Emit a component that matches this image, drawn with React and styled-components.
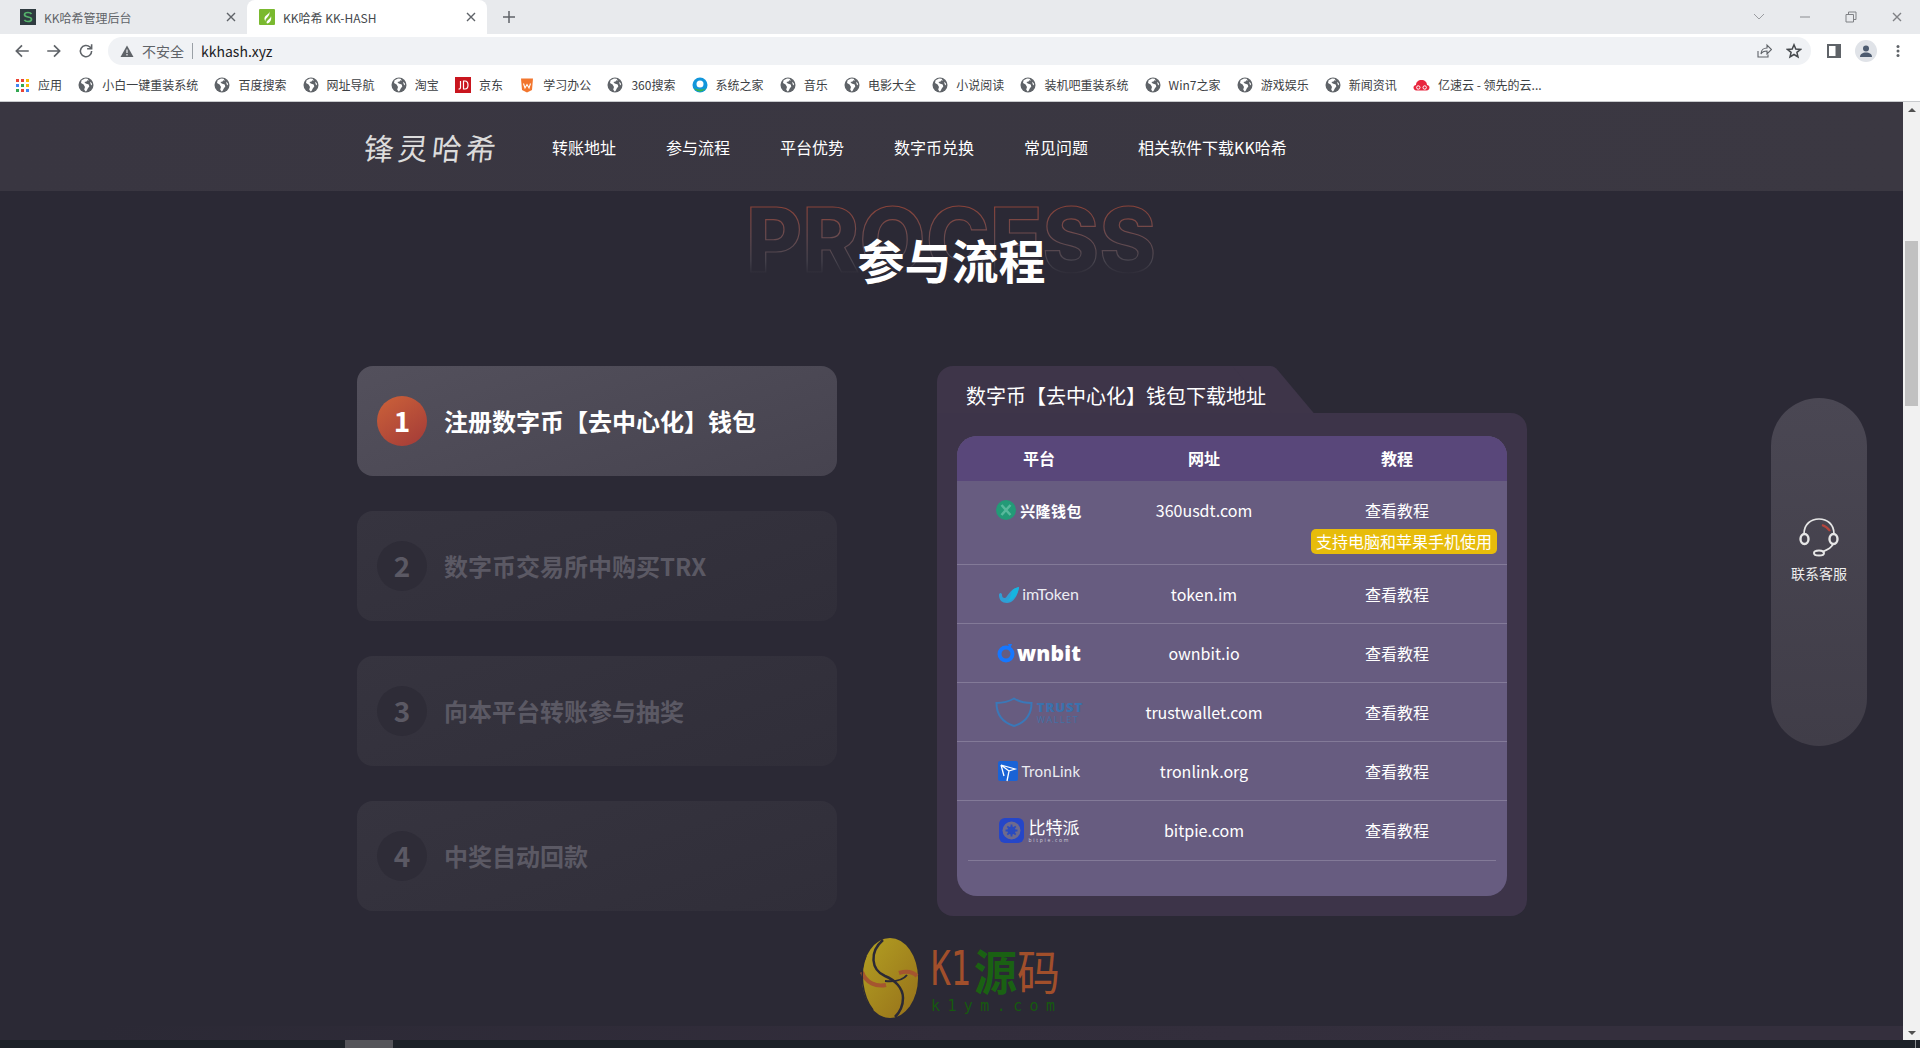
import React from "react";
import styled, { createGlobalStyle } from "styled-components";

const Global = createGlobalStyle`
  html, body { margin: 0; padding: 0; background: #2b2935; }
  body { font-family: "Noto Sans CJK SC", "Noto Sans", sans-serif; overflow: hidden; }
  * { box-sizing: border-box; }
`;

const Screen = styled.div`width: 1920px; height: 1048px; display: flex; flex-direction: column; overflow: hidden;`;

/* ---------- browser chrome ---------- */
const TabStrip = styled.div`height: 34px; background: #e8eaed; display: flex; align-items: stretch; flex: none;`;
const Tab = styled.div`
  width: ${p => p.$w}px; display: flex; align-items: center; padding-left: ${p => p.$pl}px;
  background: ${p => (p.$active ? "#fff" : "transparent")};
  border-radius: 8px 8px 0 0;
  color: ${p => (p.$active ? "#45494d" : "#5f6368")};
  font-size: 12px;
`;
const TabTitle = styled.span`margin-left: 8px; flex: 1; white-space: nowrap;`;
const TabClose = styled.span`width: 16px; height: 16px; margin-right: 8px; display: flex; align-items: center; justify-content: center;`;
const NewTab = styled.div`width: 44px; display: flex; align-items: center; justify-content: center;`;
const WinControls = styled.div`margin-left: auto; display: flex; align-items: center;`;
const WinBtn = styled.div`width: 46px; height: 28px; display: flex; align-items: center; justify-content: center;`;

const Toolbar = styled.div`height: 34px; background: #fff; display: flex; align-items: center; flex: none; padding: 0 0 0 6px;`;
const NavBtn = styled.div`width: 32px; height: 28px; display: flex; align-items: center; justify-content: center;`;
const Omnibox = styled.div`
  margin-left: 6px; width: 1703px; height: 28px; border-radius: 14px; background: #f0f2f5;
  display: flex; align-items: center; padding: 0 9px 0 12px; font-size: 14px; color: #5f6368;
`;
const OmniLabel = styled.span`margin-left: 8px;`;
const OmniDivider = styled.span`width: 1px; height: 16px; background: #9aa0a6; margin: 0 8px;`;
const OmniUrl = styled.span`color: #202124;`;
const OmniActions = styled.div`margin-left: auto; display: flex; align-items: center; gap: 14px;`;
const ToolIcons = styled.div`display: flex; align-items: center; margin-left: 16px; gap: 14px;`;
const Avatar = styled.div`width: 22px; height: 22px; border-radius: 50%; background: #e0e3e8; display: flex; align-items: center; justify-content: center;`;
const MenuDots = styled.div`margin-left: 3px; display: flex;`;

const Bookmarks = styled.div`
  height: 34px; background: #fff; border-bottom: 1px solid #c8cacd; display: flex; align-items: center;
  flex: none; padding-left: 15px; gap: 16.2px; font-size: 12px; color: #3c4043;
`;
const Bookmark = styled.div`display: flex; align-items: center; gap: ${p => p.$gap || 8}px; white-space: nowrap;`;

/* ---------- page ---------- */
const Viewport = styled.div`flex: 1; display: flex; min-height: 0;`;
const Page = styled.main`flex: 1; position: relative; background: #2b2935; display: flex; flex-direction: column; overflow: hidden;`;
const Header = styled.header`
  height: 89px; flex: none; background: linear-gradient(90deg, #393641, #3b3842);
  display: flex; align-items: center; padding-left: 364px;
`;
const Logo = styled.div`
  width: 188px; color: #dcdcdc; font-size: 30px; font-weight: 400; letter-spacing: 4px; line-height: 1;
  transform: skewX(-6deg); white-space: nowrap;
`;
const Nav = styled.nav`display: flex; gap: 50px; color: #fff; font-size: 16px; font-weight: 400;`;
const NavLink = styled.span`white-space: nowrap;`;

const Section = styled.section`flex: 1; display: flex; flex-direction: column;`;
const Head = styled.div`height: 175px; flex: none; position: relative; display: flex; justify-content: center; padding-top: 34px;`;
const Ghost = styled.svg`position: absolute; left: 744px; top: 0; overflow: visible;`;
const GhostWord = styled.text`
  font-family: "Inter", sans-serif; font-size: 90px; font-weight: 800;
`;
const Title = styled.h2`position: relative; margin: 0; color: #fff; font-size: 47px; font-weight: 700; line-height: 68px;`;
const Columns = styled.div`display: flex; align-items: flex-start; padding-left: 357px; gap: 100px;`;
const Steps = styled.div`width: 480px; display: flex; flex-direction: column; gap: 35px;`;
const Step = styled.div`
  height: 110px; border-radius: 16px; display: flex; align-items: center; padding: 0 0 2px 20px; gap: 17px;
  background: ${p => p.$active ? "linear-gradient(160deg, #53505c, #46434f)" : "linear-gradient(160deg, #36343f, #302e39)"};
  color: ${p => (p.$active ? "#fff" : "#5b5964")};
  font-size: 24px; font-weight: 700;
`;
const StepNum = styled.div`
  width: 50px; height: 50px; border-radius: 50%; display: flex; align-items: center; justify-content: center;
  font-size: 28px; font-weight: 700; margin-top: 2px; padding-bottom: 2px;
  background: ${p => p.$active ? "linear-gradient(145deg, #cc6239, #a23a38)" : "#2e2c37"};
`;

const Folder = styled.div`width: 590px; display: flex; flex-direction: column; align-items: flex-start;`;
const FolderTab = styled.div`
  position: relative; width: 336px; height: 47px; background: #3e3549; border-radius: 16px 14px 0 0;
  &::after {
    content: ""; position: absolute; right: -21px; top: 0; width: 42px; height: 47px; background: #3e3549;
    transform: skewX(40deg); border-radius: 0 4px 0 0;
  }
`;
const FolderTitle = styled.div`
  position: relative; z-index: 1; color: #fff; font-size: 20px; line-height: 24px; padding: 18px 0 0 29px; white-space: nowrap;
`;
const FolderBody = styled.div`
  position: relative; width: 590px; height: 503px; background: #3d3449; border-radius: 0 16px 16px 16px; padding: 23px 20px 0;
`;
const Table = styled.div`width: 550px; height: 460px; border-radius: 20px; overflow: hidden; background: #675c80; color: #fff; font-size: 16px;`;
const grid = "grid-template-columns: 164px 166px 220px;";
const THead = styled.div`display: grid; ${grid} height: 45px; padding-bottom: 2px; background: #59477a; align-items: center; text-align: center; font-weight: 700;`;
const Row = styled.div`
  display: grid; ${grid} height: ${p => (p.$tall ? 84 : 59)}px; padding-top: ${p => (p.$tall ? 17 : 17)}px;
  border-bottom: ${p => (p.$last ? "none" : "1px solid #837a98")};
`;
const LogoCell = styled.div`display: flex; align-items: center; justify-content: center; height: 24px;`;
const UrlCell = styled.div`text-align: center; line-height: 24px;`;
const GuideCell = styled.div`display: flex; flex-direction: column; align-items: center; line-height: 24px;`;
const Badge = styled.span`
  margin: 7px 0 0 14px; height: 25px; width: 186px; border-radius: 5px; background: #e7bc0b; color: #fff;
  font-size: 16px; line-height: 25px; text-align: center; white-space: nowrap;
`;
const EndRule = styled.div`height: 1px; margin: 0 11px; background: #837a98;`;

const BrandLogo = styled.div`display: flex; align-items: center; gap: ${p => p.$gap || 4}px; white-space: nowrap;`;
const BrandText = styled.span`
  font-family: ${p => p.$font || '"Noto Sans CJK SC", sans-serif'};
  font-size: ${p => p.$size}px; font-weight: ${p => p.$weight || 400}; color: ${p => p.$color || "#fff"};
  letter-spacing: ${p => p.$ls || 0}px; line-height: 1;
`;
const BrandStack = styled.div`display: flex; flex-direction: column; align-items: flex-start; gap: ${p => p.$gap || 1}px;`;

const Contact = styled.aside`
  position: absolute; left: 1771px; top: 296px; width: 96px; height: 348px; border-radius: 48px;
  background: linear-gradient(180deg, #4a4753, #403d48);
  display: flex; flex-direction: column; align-items: center; justify-content: center; gap: 6px;
  color: #eee; font-size: 14px; padding-bottom: 45px;
`;
const ContactLabel = styled.span`line-height: 20px;`;

const Watermark = styled.div`position: absolute; left: 859px; top: 836px; display: flex; gap: 12px; align-items: flex-start;`;
const MarkText = styled.div`display: flex; flex-direction: column; padding-top: 6px;`;
const MarkBig = styled.div`display: flex; align-items: center; height: 50px; white-space: nowrap;`;
const MarkK = styled.span`
  font-family: "DejaVu Sans Mono", monospace; font-size: 33px; color: #a14f2b; line-height: 50px; width: 43px;
  display: inline-block; transform: scaleY(1.45);
`;
const MarkCn = styled.span`
  font-size: 43px; color: ${p => p.$c}; line-height: 50px; font-weight: ${p => p.$w};
  display: inline-block; transform: scaleY(1.1);
`;
const MarkUrl = styled.span`
  margin-top: 4px; font-family: "DejaVu Sans Mono", monospace; font-size: 15px; letter-spacing: 7.4px; color: #16590f; line-height: 16px;
`;
const FooterGlow = styled.div`
  height: 14px; flex: none; margin-top: auto;
  background: linear-gradient(90deg, #2b2935 5%, #322d3b 50%, #342f3d 80%);
`;

const Scrollbar = styled.div`width: 17px; flex: none; background: #f1f1f1; display: flex; flex-direction: column; align-items: center; position: relative;`;
const ArrowUp = styled.div`
  margin-top: 6px; width: 0; height: 0; border-left: 4px solid transparent; border-right: 4px solid transparent; border-bottom: 4px solid #505050;
`;
const Thumb = styled.div`position: absolute; top: 139px; left: 2px; width: 13px; height: 165px; background: #c1c1c1;`;
const ArrowDown = styled.div`
  margin-top: auto; margin-bottom: 5px; width: 0; height: 0; border-left: 4px solid transparent; border-right: 4px solid transparent; border-top: 4px solid #505050;
`;

const Taskbar = styled.div`height: 8px; flex: none; background: #1d2228; display: flex; overflow: hidden;`;
const TaskItem = styled.div`width: 48px; height: 8px; margin-left: 345px; background: #55555a;`;
const Clock = styled.div`margin-left: auto; margin-right: 90px; padding-top: 6px; color: #fff; font-size: 12px; line-height: 14px; font-family: "Liberation Sans", sans-serif;`;
const TaskEdge = styled.div`width: 1px; height: 8px; background: #8a8d90; margin-right: 4px;`;

/* ---------- icons ---------- */
const S = ({ children, w = 16, h = 16, vb, dw, dh }) => <svg width={dw || w} height={dh || h} viewBox={vb || `0 0 ${w} ${h}`} fill="none">{children}</svg>;

const Globe = () => (
  <S>
    <circle cx="8" cy="8" r="7.5" fill="#5f6368" />
    <path d="M7 1.6 3.6 3.2 3 6l2.6 1.6L7 10l-.8 2.6 1.3 1.8 1-.4 1.4-2.8 1.4-1.6-.6-2-3-1L6.400 5 8.600 4.600 9.400 3.200 11 3.800 9.600 1.800Z" fill="#fff" />
    <path d="m12 4.800 1.800 1.400.3 2.200-1.300-.8Z" fill="#fff" />
  </S>
);
const AppsIcon = () => (
  <S w={14} h={14}>
    {[["#ea4335","#ea4335","#fbbc04"],["#4285f4","#34a853","#fbbc04"],["#34a853","#ea4335","#4285f4"]].map((r, y) =>
      r.map((c, x) => <rect key={`${x}${y}`} x={x * 5 + 1} y={y * 5 + 1} width="3" height="3" fill={c} />))}
  </S>
);
const JdIcon = () => (
  <S>
    <rect width="16" height="16" fill="#c9151e" />
    <path d="M5.500 4v6.500c0 1.300-.8 1.600-2 1.500M8.500 4v8h1.500c2 0 3-1.500 3-4s-1-4-3-4Z" stroke="#fff" strokeWidth="1.200" />
  </S>
);
const StudyIcon = () => (
  <S>
    <path d="M2 1.500h12L13 13l-5 2.500L3 13Z" fill="#f2762e" />
    <path d="M4.500 6.500 6 11l2-3.500L10 11l1.500-4.500" stroke="#fff" strokeWidth="1.100" />
  </S>
);
const LIcon = () => (
  <S>
    <circle cx="8" cy="8" r="7.500" fill="#1296db" />
    <path d="M2 11c2 4 9 5 12 0-3 2-8 2-12 0Z" fill="#38b54a" />
    <circle cx="8" cy="7" r="3.500" fill="#fff" />
  </S>
);
const CloudIcon = () => (
  <S w={17} h={16} vb="0 0 17 16">
    <path d="M3.500 13.500C1.500 13.500.5 12 .5 10.500S1.700 8 3 8c0-3 2.300-5 5.500-5S14 5 14 8c1.300 0 2.500 1 2.500 2.500s-1 3-3 3Z" fill="#e8273f" />
    <circle cx="5.300" cy="10.500" r="1.700" stroke="#fff" />
    <circle cx="11.700" cy="10.500" r="1.700" stroke="#fff" />
  </S>
);
const Close = ({ c = "#5f6368" }) => (
  <S w={10} h={10}><path d="M1 1l8 8M9 1 1 9" stroke={c} strokeWidth="1.400" /></S>
);
const FavS = () => (
  <S>
    <rect width="16" height="16" fill="#2f3b40" />
    <path d="M11.500 5c-.6-1-1.800-1.500-3.500-1.500-2 0-3.500.9-3.500 2.300C4.500 9 11.500 7 11.500 10.200c0 1.400-1.500 2.300-3.500 2.300-1.800 0-3-.6-3.600-1.700" stroke="#55b36b" strokeWidth="1.700" />
  </S>
);
const FavLeaf = () => (
  <S>
    <rect width="16" height="16" rx="1" fill="#7ab92f" />
    <path d="M10.500 2c.5 3-4.500 4-5 7-.2 1.300.3 2.500 1 3.500C5.500 9 11.500 8 10.500 2ZM12 7c0 3-4 3.500-4.500 6.500L8 14.500c3 0 5-4 4-7.500Z" fill="#fff" />
  </S>
);

const HeadsetIcon = () => (
  <svg width="42" height="40" viewBox="0 0 42 40" fill="none">
    <path d="M6 17C6 7 13 2 21 2s15 5 15 15" stroke="#e6e6e6" strokeWidth="1.700" />
    <ellipse cx="6.500" cy="22" rx="4" ry="5" stroke="#e6e6e6" strokeWidth="2.400" />
    <ellipse cx="35.500" cy="22" rx="4" ry="5" stroke="#e6e6e6" strokeWidth="2.400" />
    <path d="M35 27c-1 4-6 6-11 8" stroke="#e6e6e6" strokeWidth="1.700" />
    <ellipse cx="21" cy="36" rx="5" ry="2.500" stroke="#e6e6e6" strokeWidth="2" />
    <path d="M24 8c3 1 6 3 8 6" stroke="#b5443c" strokeWidth="2.200" />
  </svg>
);

const OvalMark = () => (
  <svg width="60" height="80" viewBox="0 0 60 80" fill="none">
    <defs>
      <linearGradient id="gold" x1="0" y1="0" x2="1" y2="1">
        <stop offset="0" stopColor="#b3a022" /><stop offset="1" stopColor="#96701a" />
      </linearGradient>
    </defs>
    <ellipse cx="31" cy="40" rx="28" ry="40" fill="url(#gold)" />
    <path d="M3 34c4 11 14 15 24 13" stroke="#a5552f" strokeWidth="4" />
    <path d="M58 38c-4-4-11-5-18-3" stroke="#a5552f" strokeWidth="4" />
    <path d="M24 2C10 14 12 32 26 38c10 4 18 12 18 22 0 8-3 14-8 19" stroke="#2b2935" strokeWidth="2.500" />
    <path d="M26 43c10 1 18-1 22-6" stroke="#2b2935" strokeWidth="2" />
    <path d="M7 18C0 34 3 58 14 72" stroke="#2b2935" strokeWidth="1.500" />
  </svg>
);

/* ---------- brand logos ---------- */
const XingLong = () => (
  <BrandLogo>
    <svg width="20" height="20" viewBox="0 0 20 20">
      <circle cx="10" cy="10" r="10" fill="#239a77" />
      <path d="M5.500 5 14.500 15M14.500 5 5.500 15" stroke="#58b99c" strokeWidth="2.500" />
    </svg>
    <BrandText $size={15} $weight={700} $ls={0.4}>兴隆钱包</BrandText>
  </BrandLogo>
);
const ImToken = () => (
  <BrandLogo $gap={3}>
    <svg width="20" height="17" viewBox="0 0 20 17">
      <path d="M20 1c-1 9-6 16-12 16C3 17 0 14 0 9c0-1 .5-2 1.500-2 1 0 1.500 1 1.500 2 0 2 1.500 3.500 3 3C9 11 10 3 20 1Z" fill="#2f9fd6" />
      <path d="M20 1C19 9 14 15 8 15c4-2 4-8 5-10 1-2 4-3 7-4Z" fill="#16b5e0" />
    </svg>
    <BrandText $size={16} $font={'"Lato", sans-serif'} $color="#ececf2">imToken</BrandText>
  </BrandLogo>
);
const OwnBit = () => (
  <BrandLogo $gap={2}>
    <svg width="18" height="19" viewBox="0 0 18 19">
      <circle cx="9" cy="10" r="6.500" fill="none" stroke="#1677ff" strokeWidth="4" />
      <path d="M11 0h4l-2 5Z" fill="#1677ff" />
    </svg>
    <BrandText $size={21} $weight={800} $font={'"Open Sans", sans-serif'} $ls={0.2}>wnbit</BrandText>
  </BrandLogo>
);
const Trust = () => (
  <BrandLogo $gap={4}>
    <svg width="38" height="30" viewBox="0 0 38 30" fill="none">
      <path d="M19 1.500C13 5 7 6 1.500 6c0 11 5 19 17.500 23C31.500 25 36.500 17 36.500 6 31 6 25 5 19 1.500Z" stroke="#3a78b8" strokeWidth="2" />
    </svg>
    <BrandStack>
      <BrandText $size={13} $weight={800} $color="#3a72ae" $font={'"Open Sans", sans-serif'} $ls={1}>TRUST</BrandText>
      <BrandText $size={9} $color="#4470a4" $font={'"Open Sans", sans-serif'} $ls={1.5}>WALLET</BrandText>
    </BrandStack>
  </BrandLogo>
);
const TronLink = () => (
  <BrandLogo $gap={4}>
    <svg width="20" height="21" viewBox="0 0 20 21">
      <rect width="20" height="20" rx="2" fill="#1a63d6" />
      <path d="M3 4 17 8 11 10 9 20M3 4 11 10M3 4 6 15" fill="none" stroke="#fff" strokeWidth="1.300" />
    </svg>
    <BrandText $size={15} $font={'"Lato", sans-serif'} $color="#ececf2" $ls={0.3}>TronLink</BrandText>
  </BrandLogo>
);
const BitPie = () => (
  <BrandLogo $gap={5}>
    <svg width="25" height="25" viewBox="0 0 25 25">
      <rect width="25" height="25" rx="6" fill="#2546c8" />
      <circle cx="12.500" cy="12.500" r="9" fill="#6d6a8e" />
      <circle cx="12.500" cy="12.500" r="4" fill="#2a4bc0" />
      <path d="M12.500 6.500v12M6.500 12.500h12M8.300 8.300l8.400 8.400M16.700 8.300l-8.400 8.400" stroke="#2a4bc0" strokeWidth="1.800" />
    </svg>
    <BrandStack $gap={3}>
      <BrandText $size={17} $ls={0}>比特派</BrandText>
      <BrandText $size={5} $ls={1.700} $color="#d0d0dc" $font={'"Open Sans", sans-serif'}>bitpie.com</BrandText>
    </BrandStack>
  </BrandLogo>
);

/* ---------- data ---------- */
const bookmarks = [
  ["应用", <AppsIcon />, 9], ["小白一键重装系统", <Globe />], ["百度搜索", <Globe />], ["网址导航", <Globe />],
  ["淘宝", <Globe />], ["京东", <JdIcon />], ["学习办公", <StudyIcon />], ["360搜索", <Globe />], ["系统之家", <LIcon />],
  ["音乐", <Globe />], ["电影大全", <Globe />], ["小说阅读", <Globe />], ["装机吧重装系统", <Globe />],
  ["Win7之家", <Globe />], ["游戏娱乐", <Globe />], ["新闻资讯", <Globe />], ["亿速云 - 领先的云...", <CloudIcon />],
];
const navs = ["转账地址", "参与流程", "平台优势", "数字币兑换", "常见问题", "相关软件下载KK哈希"];
const steps = ["注册数字币【去中心化】钱包", "数字币交易所中购买TRX", "向本平台转账参与抽奖", "中奖自动回款"];
const wallets = [
  [<XingLong />, "360usdt.com"], [<ImToken />, "token.im"], [<OwnBit />, "ownbit.io"],
  [<Trust />, "trustwallet.com"], [<TronLink />, "tronlink.org"], [<BitPie />, "bitpie.com"],
];

export default function App() {
  return (
    <Screen>
      <Global />
      <TabStrip>
        <Tab $w={247} $pl={20}>
          <FavS /><TabTitle>KK哈希管理后台</TabTitle><TabClose><Close /></TabClose>
        </Tab>
        <Tab $w={240} $pl={12} $active>
          <FavLeaf /><TabTitle>KK哈希 KK-HASH</TabTitle><TabClose><Close /></TabClose>
        </Tab>
        <NewTab>
          <S w={14} h={14}><path d="M7 1v12M1 7h12" stroke="#5f6368" strokeWidth="1.500" /></S>
        </NewTab>
        <WinControls>
          <WinBtn><S w={12} h={8}><path d="M1 1l5 5 5-5" stroke="#9a9ca0" /></S></WinBtn>
          <WinBtn><S w={12} h={2}><path d="M1 1h10" stroke="#8a8c90" /></S></WinBtn>
          <WinBtn><S w={12} h={12}><path d="M1 3.500h7.500V11H1ZM3.500 3.500V1H11v7.500H8.500" stroke="#7f8185" /></S></WinBtn>
          <WinBtn><Close c="#7f8185" /></WinBtn>
        </WinControls>
      </TabStrip>
      <Toolbar>
        <NavBtn><S dw={18} dh={18}><path d="M14 8H3M8 3 3 8l5 5" stroke="#5f6368" strokeWidth="1.500" /></S></NavBtn>
        <NavBtn><S dw={18} dh={18}><path d="M2 8h11M8 3l5 5-5 5" stroke="#5f6368" strokeWidth="1.500" /></S></NavBtn>
        <NavBtn><S dw={18} dh={18}><path d="M13 8a5 5 0 1 1-1.500-3.500L13 6M13 2v4H9" stroke="#5f6368" strokeWidth="1.400" /></S></NavBtn>
        <Omnibox>
          <S w={14} h={14}><path d="M7 1.500 13.500 13H.5Z" fill="#5f6368" /><path d="M7 5.500V9M7 10v1.500" stroke="#f0f2f5" strokeWidth="1.200" /></S>
          <OmniLabel>不安全</OmniLabel>
          <OmniDivider />
          <OmniUrl>kkhash.xyz</OmniUrl>
          <OmniActions>
            <S><path d="M2 8v6h10v-2.500M5 11c0-4 3-6 6-6V2l4.500 4.500L11 11V8c-3 0-5 1-6 3Z" stroke="#5f6368" strokeWidth="1.100" /></S>
            <S><path d="M8 1.800 9.800 6l4.700.4-3.600 3 1.100 4.600L8 11.500 4 14l1.100-4.600-3.600-3L6.200 6Z" stroke="#45494d" strokeWidth="1.500" /></S>
          </OmniActions>
        </Omnibox>
        <ToolIcons>
          <S w={14} h={14}><rect x="0" y="0" width="14" height="14" fill="#5f6368" /><rect x="2" y="2" width="6.500" height="10" fill="#fff" /></S>
          <Avatar>
            <S w={14} h={14}><circle cx="7" cy="4.500" r="3" fill="#4d5b70" /><path d="M1 13c0-3 2.500-4.500 6-4.500s6 1.500 6 4.500Z" fill="#4d5b70" /></S>
          </Avatar>
          <MenuDots>
            <S w={8} h={14} vb="0 0 8 14"><circle cx="4" cy="2.500" r="1.500" fill="#5f6368" /><circle cx="4" cy="7" r="1.500" fill="#5f6368" /><circle cx="4" cy="11.500" r="1.500" fill="#5f6368" /></S>
          </MenuDots>
        </ToolIcons>
      </Toolbar>
      <Bookmarks>
        {bookmarks.map(([t, icon, gap]) => <Bookmark key={t} $gap={gap}>{icon}<span>{t}</span></Bookmark>)}
      </Bookmarks>

      <Viewport>
        <Page>
          <Header>
            <Logo>锋灵哈希</Logo>
            <Nav>{navs.map(n => <NavLink key={n}>{n}</NavLink>)}</Nav>
          </Header>
          <Section>
            <Head>
              <Ghost width="415" height="90" viewBox="0 0 415 90" fill="none">
                <defs>
                  <linearGradient id="ghostStroke" gradientUnits="userSpaceOnUse" x1="0" y1="14" x2="0" y2="84">
                    <stop offset="0" stopColor="#8a4238" />
                    <stop offset="0.45" stopColor="#6a4b4f" />
                    <stop offset="0.8" stopColor="#48454f" />
                    <stop offset="1" stopColor="#2b2935" />
                  </linearGradient>
                </defs>
                <GhostWord x="2" y="81" textLength="410" lengthAdjust="spacingAndGlyphs" stroke="url(#ghostStroke)" strokeWidth="1.200">PROCESS</GhostWord>
              </Ghost>
              <Title>参与流程</Title>
            </Head>
            <Columns>
              <Steps>
                {steps.map((s, i) => (
                  <Step key={s} $active={i === 0}>
                    <StepNum $active={i === 0}>{i + 1}</StepNum>
                    <span>{s}</span>
                  </Step>
                ))}
              </Steps>
              <Folder>
                <FolderTab><FolderTitle>数字币【去中心化】钱包下载地址</FolderTitle></FolderTab>
                <FolderBody>
                  <Table>
                    <THead><span>平台</span><span>网址</span><span>教程</span></THead>
                    {wallets.map(([logo, url], i) => (
                      <Row key={url} $tall={i === 0} $last={i === 5}>
                        <LogoCell>{logo}</LogoCell>
                        <UrlCell>{url}</UrlCell>
                        <GuideCell>
                          <span>查看教程</span>
                          {i === 0 && <Badge>支持电脑和苹果手机使用</Badge>}
                        </GuideCell>
                      </Row>
                    ))}
                    <EndRule />
                  </Table>
                </FolderBody>
              </Folder>
            </Columns>
            <FooterGlow />
          </Section>
          <Contact>
            <HeadsetIcon />
            <ContactLabel>联系客服</ContactLabel>
          </Contact>
          <Watermark>
            <OvalMark />
            <MarkText>
              <MarkBig>
                <MarkK>K1</MarkK>
                <MarkCn $c="#1a6113" $w={700}>源</MarkCn>
                <MarkCn $c="#a14f2b" $w={400}>码</MarkCn>
              </MarkBig>
              <MarkUrl>k1ym.com</MarkUrl>
            </MarkText>
          </Watermark>
        </Page>
        <Scrollbar>
          <ArrowUp />
          <Thumb />
          <ArrowDown />
        </Scrollbar>
      </Viewport>
      <Taskbar>
        <TaskItem />
        <Clock>18:08</Clock>
        <TaskEdge />
      </Taskbar>
    </Screen>
  );
}
